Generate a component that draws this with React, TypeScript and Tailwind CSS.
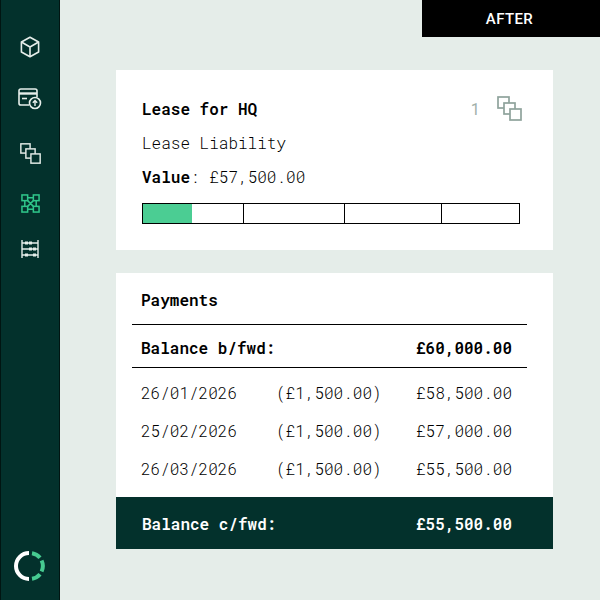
import React from 'react';

const mono = "font-['Roboto_Mono','DejaVu_Sans_Mono',monospace]";

const payments = [
  { date: '26/01/2026', amount: '(£1,500.00)', balance: '£58,500.00' },
  { date: '25/02/2026', amount: '(£1,500.00)', balance: '£57,000.00' },
  { date: '26/03/2026', amount: '(£1,500.00)', balance: '£55,500.00' },
];

const CubeIcon = () => (
  <svg width="20" height="22" viewBox="0 0 20 22" fill="none" stroke="#e6eeea" strokeWidth="1.6" strokeLinejoin="round">
    <path d="M10 1.2 18.6 6V16L10 20.8 1.4 16V6Z" />
    <path d="M1.4 6 10 11 18.6 6M10 11V20.8" />
  </svg>
);

const CardIcon = () => (
  <svg width="24" height="22" viewBox="0 0 24 22" fill="none" stroke="#e6eeea" strokeWidth="1.6">
    <path d="M11 17H2.8A1.8 1.8 0 0 1 1 15.2V2.8A1.8 1.8 0 0 1 2.8 1H17.2A1.8 1.8 0 0 1 19 2.8V9" />
    <path d="M1 5.5H19" strokeWidth="2.4" />
    <path d="M4 10.5H9" />
    <circle cx="17" cy="15" r="5.5" />
    <path d="M17 18V12.5M14.8 14.8 17 12.5 19.2 14.8" strokeWidth="1.4" />
  </svg>
);

const StackIcon = ({ color, fill, size }: { color: string; fill: string; size: number }) => (
  <svg width={size} height={size} viewBox="0 0 25 25" fill={fill} stroke={color} strokeWidth="1.7">
    <rect x="1" y="1" width="11" height="11" />
    <rect x="7" y="7" width="11" height="11" />
    <rect x="13" y="13" width="11" height="11" />
  </svg>
);

const NetworkIcon = () => (
  <svg width="19" height="19" viewBox="0 0 20 20" fill="none" stroke="#2fc58a" strokeWidth="1.6">
    <rect x="1" y="1" width="6" height="6" />
    <rect x="13" y="1" width="6" height="6" />
    <rect x="1" y="13" width="6" height="6" />
    <rect x="13" y="13" width="6" height="6" />
    <path d="M7 7 13 13M13 7 7 13M7 4H13M7 16H13M4 7V13M16 7V13" />
  </svg>
);

const AbacusIcon = () => (
  <svg width="20" height="20" viewBox="0 0 20 20" fill="none" stroke="#e6eeea" strokeWidth="1.4">
    <path d="M2 1V19M18 1V19M2 4H18M2 10H18M2 16H18" />
    <g fill="#e6eeea" stroke="none">
      <rect x="5" y="2.5" width="3" height="3" />
      <rect x="9" y="2.5" width="3" height="3" />
      <rect x="9" y="8.5" width="3" height="3" />
      <rect x="13" y="8.5" width="3" height="3" />
      <rect x="5" y="14.5" width="3" height="3" />
      <rect x="13" y="14.5" width="3" height="3" />
    </g>
  </svg>
);

const Logo = () => (
  <svg width="32" height="32" viewBox="14 550 32 32" fill="none" strokeWidth="4">
    <path d="M29 553A13 13 0 0 0 29 579" stroke="#ffffff" />
    <path d="M32 553.2A13 13 0 0 1 40 557.7M41.6 560.5A13 13 0 0 1 41.6 571.5M40 574.3A13 13 0 0 1 32 578.8" stroke="#46cb91" />
  </svg>
);

export default function App() {
  return (
    <div className={`${mono} relative flex h-[600px] w-[600px] overflow-hidden bg-[#e5ede9] text-base text-black`}>
      <aside className="flex h-full w-[60px] flex-col items-center border-x border-[#011512] bg-[#03312c] pt-[36px] pb-[18px]">
        <CubeIcon />
        <div className="mt-[30px]"><CardIcon /></div>
        <div className="mt-[33px]"><StackIcon color="#e6eeea" fill="#03312c" size={21} /></div>
        <div className="mt-[30px]"><NetworkIcon /></div>
        <div className="mt-[26px]"><AbacusIcon /></div>
        <div className="mt-auto"><Logo /></div>
      </aside>

      <div className="absolute top-0 right-0 flex h-[37px] w-[178px] items-center justify-center bg-black pt-[1px] pr-[3px] font-['Roboto',sans-serif] text-[15px] font-medium tracking-[0.4px] text-white">
        AFTER
      </div>

      <main className="ml-[56px] flex w-[437px] flex-col gap-[23px] pt-[70px]">
        <section className="h-[180px] bg-white px-[26px] pt-[22px]">
          <div className="flex h-[34px] items-center justify-between pr-[5px] pb-[1px]">
            <h2 className="font-semibold">Lease for HQ</h2>
            <div className="flex items-center gap-[17px] text-[#9fb0aa]">
              <span>1</span>
              <StackIcon color="#8fa39c" fill="#ffffff" size={25} />
            </div>
          </div>
          <p className="h-[34px] leading-[34px] font-[350]">Lease Liability</p>
          <p className="h-[34px] leading-[34px] font-[350]"><b className="font-semibold">Value</b>: £57,500.00</p>
          <div className="mt-[9px] flex h-[21px] w-[378px] border border-black">
            <div className="w-[101px] border-r border-black">
              <div className="h-full w-[49px] bg-[#4bcd93]" />
            </div>
            <div className="w-[101px] border-r border-black" />
            <div className="w-[97px] border-r border-black" />
            <div className="flex-1" />
          </div>
        </section>

        <section className="flex h-[276px] flex-col bg-white">
          <div className="mr-[26px] ml-[16px] flex flex-1 flex-col">
            <h2 className="flex h-[52px] items-center border-b border-black pt-[2px] pr-[15px] pl-[9px] font-semibold">Payments</h2>
            <div className="flex h-[43px] items-center justify-between border-b border-black pt-[3px] pr-[15px] pl-[9px] font-semibold">
              <span>Balance b/fwd:</span>
              <span>£60,000.00</span>
            </div>
            <div className="pt-[6px]">
              {payments.map((p) => (
                <div key={p.date} className="grid h-[38px] grid-cols-[135px_1fr_auto] items-center pr-[15px] pl-[9px] font-light text-black">
                  <span>{p.date}</span>
                  <span>{p.amount}</span>
                  <span>{p.balance}</span>
                </div>
              ))}
            </div>
          </div>
          <div className="flex h-[52px] items-center justify-between bg-[#03312c] pt-[2px] pr-[41px] pl-[26px] font-semibold text-white">
            <span>Balance c/fwd:</span>
            <span>£55,500.00</span>
          </div>
        </section>
      </main>
    </div>
  );
}
